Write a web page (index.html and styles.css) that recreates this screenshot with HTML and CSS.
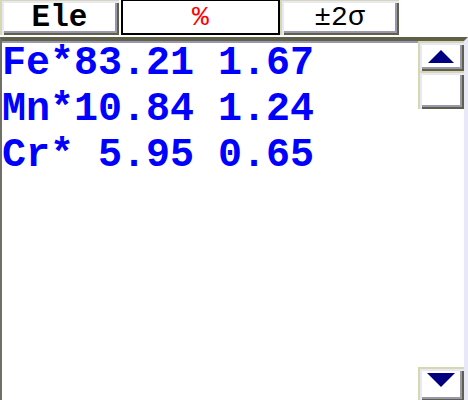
FILE: index.html
```html
<!DOCTYPE html>
<html lang="en">
<head>
  <meta charset="UTF-8" />
  <title>Analyse</title>
  <link rel="stylesheet" href="styles.css">
</head>
<body>

  <!-- column headers -->
  <div class="tabs">
    <div class="tab bevel tab-ele">Ele</div>
    <div class="tab tab-pct active">%</div>
    <div class="tab bevel tab-sigma">±2σ</div>
  </div>

  <!-- result list + scroll bar -->
  <div class="panel">
    <div class="rows">
      <div class="row">Fe*83.21 1.67</div>
      <div class="row">Mn*10.84 1.24</div>
      <div class="row">Cr* 5.95 0.65</div>
    </div>
    <div class="scroll">
      <div class="btn bevel btn-up">
        <svg viewBox="0 0 46 30"><polygon points="10,22 36,22 23,9" /></svg>
      </div>
      <div class="btn bevel thumb"></div>
      <div class="track"></div>
      <div class="btn bevel btn-down">
        <svg viewBox="0 0 46 34"><polygon points="9,6 37,6 23,20" /></svg>
      </div>
    </div>
  </div>

</body>
</html>
```

FILE: styles.css
```css
body {
  margin: 0;
  width: 468px;
  height: 400px;
  overflow: hidden;
  background: #ffffff;
  font-family: "Liberation Mono", monospace;
}

/* raised 3D look: light top/left, dark bottom/right */
.bevel {
  background: #ffffff;
  box-shadow: inset 2px 2px #d8d8b0, inset 4px 4px #e8e8f8,
              inset -2px -2px #606048, inset -4px -4px #9898b0;
}

.tabs {
  display: flex;
  height: 36px;
  margin-top: -1px;
}
.tab {
  box-sizing: border-box;
  height: 36px;
  display: flex;
  align-items: center;
  justify-content: center;
}
.tab-ele {
  width: 119px;
  margin-right: 2px;
  font-weight: bold;
  font-size: 31px;
  color: #000000;
}
.tab-pct {
  width: 159px;
  font-size: 28px;
  color: #ff0000;
}
.tab-sigma {
  width: 119px;
  font-size: 28px;
  color: #000000;
}
.active {
  border: 2px solid #000000;
  background: #ffffff;
}

/* sunken frame around the list */
.panel {
  display: flex;
  box-sizing: border-box;
  height: 368px;
  margin-top: 2px;
  border-style: solid;
  border-width: 4px 4px 4px 2px;
  border-color: #606048 #e8e8f8 #e8e8f8 #707068;
  box-shadow: inset 0 2px #9898b0, inset -2px 0 #ffffff;
}

.rows {
  flex: 1;
  font-weight: bold;
  font-size: 40px;
  line-height: 46px;
  color: #0000ff;
}
.row {
  white-space: pre;
}

.scroll {
  width: 46px;
  display: flex;
  flex-direction: column;
}
.btn {
  box-sizing: border-box;
}
.btn svg {
  display: block;
  width: 100%;
  height: 100%;
  fill: #000080;
}
.btn-up {
  height: 30px;
}
.thumb {
  height: 38px;
}
.track {
  flex: 1;
}
.btn-down {
  height: 34px;
}
```
